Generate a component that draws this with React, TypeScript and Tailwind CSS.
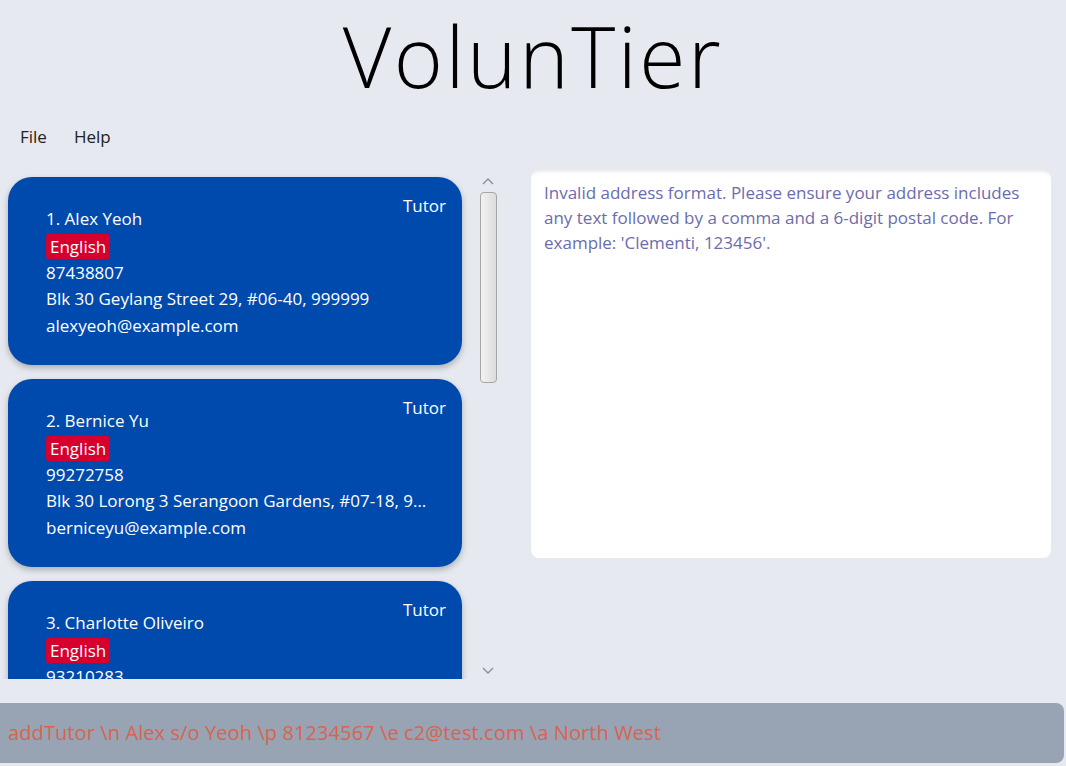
import React from "react";

const people = [
  {
    name: "1. Alex Yeoh",
    phone: "87438807",
    address: "Blk 30 Geylang Street 29, #06-40, 999999",
    email: "alexyeoh@example.com",
  },
  {
    name: "2. Bernice Yu",
    phone: "99272758",
    address: "Blk 30 Lorong 3 Serangoon Gardens, #07-18, 987654",
    email: "berniceyu@example.com",
  },
  {
    name: "3. Charlotte Oliveiro",
    phone: "93210283",
    address: "Blk 11 Ang Mo Kio Street 74, #11-04, 123456",
    email: "charlotte@example.com",
  },
];

const ui = { fontFamily: '"Open Sans", "Noto Sans", sans-serif' };

function PersonCard({ p }: { p: (typeof people)[number] }) {
  return (
    <div className="relative shrink-0 h-[188px] w-[454px] rounded-[24px] bg-[#004aad] text-white shadow-[0_3px_6px_rgba(0,0,0,0.25)]">
      <span className="absolute right-[16px] top-[16px] text-[17px] leading-[26px]">Tutor</span>
      <div className="flex w-[426px] flex-col pl-[38px] pt-[29px] text-[17px] leading-[26.7px]">
        <span>{p.name}</span>
        <span className="my-[1px] self-start rounded-[3px] bg-[#d6002f] px-[4px] leading-[25px]">English</span>
        <span>{p.phone}</span>
        <span className="truncate">{p.address}</span>
        <span>{p.email}</span>
      </div>
    </div>
  );
}

function Chevron({ up }: { up?: boolean }) {
  return (
    <svg width="12" height="8" viewBox="0 0 12 8" fill="none" stroke="#8a8f98" strokeWidth={1.4}>
      <path d={up ? "M1 7 6 2l5 5" : "M1 1l5 5 5-5"} />
    </svg>
  );
}

export default function App() {
  return (
    <div className="flex h-[766px] w-[1066px] flex-col overflow-hidden bg-[#e6e9ef]" style={ui}>
      {/* Title */}
      <div className="flex h-[112px] items-center justify-center">
        <h1
          className="text-[84px] font-light leading-none tracking-[2.5px] text-black"
          style={{ fontFamily: '"Open Sans", "Lato", sans-serif' }}
        >
          VolunTier
        </h1>
      </div>

      {/* Menu */}
      <div className="flex h-[48px] items-center gap-[27px] pl-[20px] pt-[2px] text-[17px] text-[#222]">
        <span>File</span>
        <span>Help</span>
      </div>

      {/* Main */}
      <div className="flex h-[519px] pt-[10px]">
        <div className="flex w-[500px] shrink-0">
          <div className="flex w-[470px] flex-col gap-[14px] overflow-hidden pl-[8px] pt-[7px]">
            {people.map((p) => (
              <PersonCard key={p.name} p={p} />
            ))}
          </div>
          <div className="flex w-[30px] flex-col items-center pl-[6px]">
            <div className="flex h-[22px] items-center">
              <Chevron up />
            </div>
            <div className="h-[191px] w-[17px] rounded-[4px] border border-[#a6a6a6] bg-gradient-to-r from-[#f2f2f2] to-[#dcdcdc]" />
            <div className="flex-1" />
            <div className="flex h-[12px] items-start">
              <Chevron />
            </div>
          </div>
        </div>

        <div className="ml-[31px] h-[388px] w-[520px] rounded-[8px] bg-white px-[13px] pt-[10px] shadow-[inset_0_4px_3px_-2px_rgba(0,0,0,0.08)]">
          <p className="whitespace-nowrap text-[17px] leading-[25px] text-[#6b6cae]">
            Invalid address format. Please ensure your address includes
            <br />
            any text followed by a comma and a 6-digit postal code. For
            <br />
            example: 'Clementi, 123456'.
          </p>
        </div>
      </div>

      <div className="h-[24px]" />

      {/* Command box */}
      <div className="flex h-[60px] w-[1064px] items-center rounded-r-[8px] bg-[#98a3b4] pl-[8px]">
        <span className="whitespace-nowrap text-[20px] tracking-[0.1px] text-[#d9644e]">
          addTutor \n Alex s/o Yeoh \p 81234567 \e c2@test.com \a North West
        </span>
      </div>
    </div>
  );
}
